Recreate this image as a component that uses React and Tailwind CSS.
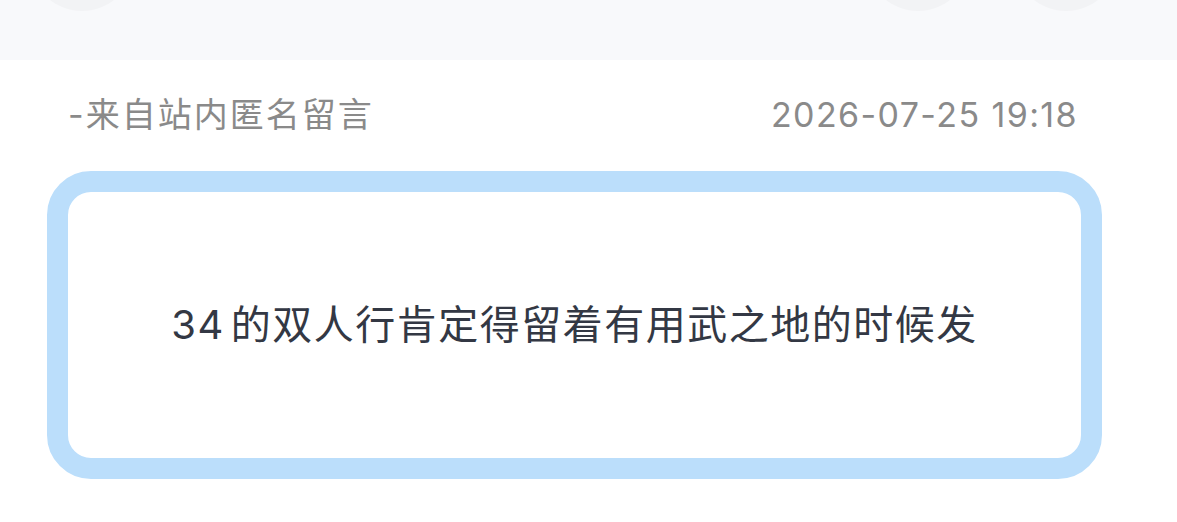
export default function App() {
  const font = { fontFamily: '"Inter", "Noto Sans CJK SC", sans-serif' };
  return (
    <div className="w-[1177px] h-[522px] bg-white overflow-hidden" style={font}>
      {/* toolbar strip, scrolled mostly out of view */}
      <div className="h-[60px] bg-[#f8f9fb] overflow-hidden">
        <div className="flex items-start mt-[-93px]">
          <div className="ml-[30px] w-[104px] h-[104px] rounded-full bg-[#f2f3f5]" />
          <div className="ml-auto w-[104px] h-[104px] rounded-full bg-[#f2f3f5]" />
          <div className="ml-[44px] mr-[59px] w-[104px] h-[104px] rounded-full bg-[#f2f3f5]" />
        </div>
      </div>

      {/* message meta */}
      <div className="h-[110px] flex items-center justify-between pl-[68px] pr-[99px] text-[#8a8a8a]">
        <span className="text-[34px] leading-[48px] tracking-[2px]">-来自站内匿名留言</span>
        <span className="text-[34px] leading-[48px] tracking-[1.4px]">2026-07-25 19:18</span>
      </div>

      {/* message body */}
      <div className="mt-[1px] ml-[47px] w-[1055px] h-[308px] rounded-[44px] border-[21px] border-[#bbdefb] bg-white flex items-center justify-center">
        <p className="text-[40px] leading-[56px] tracking-[1.5px] text-[#333844]">
          34<span className="ml-[6px]">的双人行肯定得留着有用武之地的时候发</span>
        </p>
      </div>
    </div>
  );
}
